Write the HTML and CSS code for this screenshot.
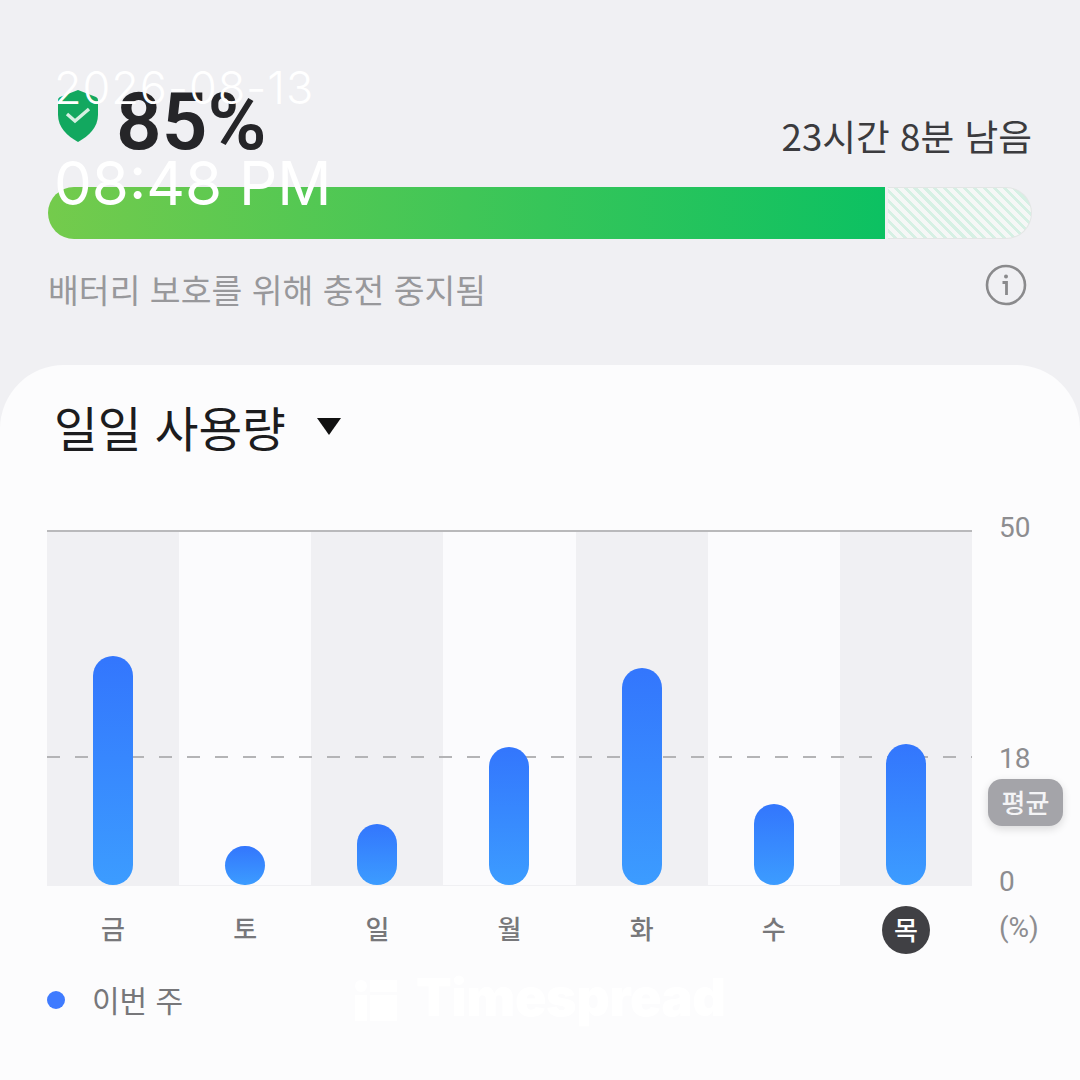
FILE: index.html
```html
<!DOCTYPE html>
<html lang="ko">
<head>
<meta charset="utf-8">
<title>배터리</title>
<link rel="stylesheet" href="styles.css">
</head>
<body>
<div class="stamp">
  <div class="stamp-date">2026-08-13</div>
  <div class="stamp-time">08:48 PM</div>
</div>
<header class="top">
  <div class="status-row">
    <svg class="shield" viewBox="0 0 40 52" aria-hidden="true">
      <path d="M20 0 L38 7 Q40 8 40 10 V25 C40 37 31 46 20 52 C9 46 0 37 0 25 V10 Q0 8 2 7 Z" fill="#12a85f"/>
      <path d="M9 24 L17 31 L31 19" fill="none" stroke="#d5f0e2" stroke-width="3.4"/>
    </svg>
    <div class="percent">85%</div>
    <div class="remaining">23시간 8분 남음</div>
  </div>
  <div class="battery">
    <div class="battery-fill"></div>
    <div class="battery-rest"></div>
  </div>
  <div class="note-row">
    <span class="note">배터리 보호를 위해 충전 중지됨</span>
    <svg class="info" viewBox="0 0 42 42" aria-hidden="true">
      <circle cx="21" cy="21" r="19" fill="none" stroke="#8a8a8c" stroke-width="2.6"/>
      <circle cx="21" cy="12.5" r="2" fill="#8a8a8c"/>
      <path d="M17.5 18.5 H21.5 V31" fill="none" stroke="#8a8a8c" stroke-width="2.8"/>
    </svg>
  </div>
</header>
<main class="card">
  <div class="title-row">
    <h1 class="title">일일 사용량</h1>
    <svg class="caret" viewBox="0 0 24 18" aria-hidden="true"><path d="M0 1 H24 L12 18 Z" fill="#111"/></svg>
  </div>
  <div class="chart-row">
    <div class="chart">
      <div class="col"></div><div class="col alt"></div><div class="col"></div><div class="col alt"></div><div class="col"></div><div class="col alt"></div><div class="col"></div>
      <div class="avg-line"></div>
      <div class="bars">
        <div class="slot"><div class="bar" style="height:229px"></div></div>
        <div class="slot"><div class="bar" style="height:39px"></div></div>
        <div class="slot"><div class="bar" style="height:61px"></div></div>
        <div class="slot"><div class="bar" style="height:138px"></div></div>
        <div class="slot"><div class="bar" style="height:217px"></div></div>
        <div class="slot"><div class="bar" style="height:81px"></div></div>
        <div class="slot"><div class="bar" style="height:141px"></div></div>
      </div>
    </div>
    <div class="axis">
      <span class="tick tick-50">50</span>
      <span class="tick tick-18">18</span>
      <span class="avg-pill">평균</span>
      <span class="tick tick-0">0</span>
    </div>
  </div>
  <div class="days-row">
    <div class="days">
      <span class="day">금</span><span class="day">토</span><span class="day">일</span><span class="day">월</span><span class="day">화</span><span class="day">수</span>
      <span class="day"><span class="today">목</span></span>
    </div>
    <span class="unit">(%)</span>
  </div>
  <div class="legend">
    <span class="legend-dot"></span>
    <span class="legend-text">이번 주</span>
  </div>
  <div class="watermark">
    <svg class="wm-icon" viewBox="0 0 42 41" aria-hidden="true">
      <circle cx="6" cy="6" r="6" fill="#fff"/>
      <rect x="15" y="0" width="27" height="12" fill="#fff"/>
      <rect x="0" y="15" width="12" height="26" fill="#fff"/>
      <rect x="15" y="15" width="27" height="26" fill="#fff"/>
    </svg>
    <span class="wm-text">Timespread</span>
  </div>
</main>
</body>
</html>
```
FILE: styles.css
```css
* { box-sizing: border-box; }
html, body { margin: 0; padding: 0; }
body {
  position: relative;
  width: 1080px;
  height: 1080px;
  overflow: hidden;
  background: #f0f0f3;
  font-family: "Noto Sans CJK KR", "Noto Sans", sans-serif;
  display: flex;
  flex-direction: column;
}
.stamp {
  position: absolute;
  left: 54px;
  top: 58px;
  z-index: 5;
  color: #fff;
  font-family: Inter, sans-serif;
}
.stamp-date { font-size: 45px; line-height: 60px; font-weight: 350; letter-spacing: 0.9px; }
.stamp-time { font-size: 60px; line-height: 72px; margin-top: 29px; font-weight: 400; }

.top { height: 365px; padding: 88px 48px 0; flex: none; }
.status-row { display: flex; align-items: center; height: 76px; }
.shield { width: 40px; height: 52px; margin: -20px 0 0 10px; flex: none; }
.percent {
  font-family: Roboto, sans-serif;
  font-weight: 600;
  font-size: 80px;
  line-height: 76px;
  color: #252528;
  margin-left: 18px;
  margin-top: -8px;
}
.remaining {
  margin-left: auto;
  font-size: 36.7px;
  line-height: 50px;
  color: #3b3b3e;
  margin-top: 17px;
}
.battery { display: flex; gap: 3px; height: 52px; margin-top: 23px; }
.battery-fill {
  width: 837px;
  border-radius: 26px 0 0 26px;
  background: linear-gradient(90deg, #74cb4c 0%, #0cc162 100%);
}
.battery-rest {
  flex: 1;
  border: 1px solid #e3e6e5;
  border-left: 0;
  border-radius: 0 26px 26px 0;
  background: repeating-linear-gradient(45deg, #f5f7f6 0 4px, #d6f0e4 4px 7px);
}
.note-row { display: flex; justify-content: space-between; align-items: center; height: 60px; margin-top: 19px; padding-right: 5px; }
.note { font-size: 33.5px; line-height: 60px; color: #98989b; margin-top: 2px; }
.info { width: 42px; height: 42px; flex: none; margin-top: -6px; }

.card {
  position: relative;
  flex: 1;
  background: #fcfcfd;
  border-radius: 64px 64px 0 0;
  padding: 0 0 0 47px;
}
.title-row { display: flex; align-items: center; height: 165px; padding: 0 0 42px 7px; }
.title { margin: 0; font-size: 47.5px; font-weight: 400; line-height: 60px; color: #1c1c1e; }
.caret { width: 24px; height: 18px; margin: -2px 0 0 31px; }

.chart-row { display: flex; height: 356px; }
.chart {
  position: relative;
  width: 925px;
  display: grid;
  grid-template-columns: repeat(7, 1fr);
  border-top: 2px solid #b9b9bb;
  border-bottom: 1px solid #f0f0f3;
}
.col { background: #f0f0f3; }
.col.alt { background: #fbfbfd; }
.avg-line {
  position: absolute;
  left: 0;
  right: 0;
  top: 224px;
  height: 2px;
  background: repeating-linear-gradient(90deg, #b4b4b6 0 13px, transparent 13px 28px);
}
.bars { position: absolute; inset: 0; display: grid; grid-template-columns: repeat(7, 1fr); align-items: end; }
.slot { display: flex; justify-content: center; align-items: flex-end; }
.bar {
  width: 40px;
  border-radius: 20px;
  background: linear-gradient(180deg, #3376fd 0%, #3c9cff 100%);
}
.axis { position: relative; flex: 1; color: #8d8d90; font-size: 28px; }
.tick { position: absolute; left: 27px; line-height: 34px; font-family: Roboto, sans-serif; }
.tick-50 { top: -19px; }
.tick-18 { top: 212px; }
.tick-0 { top: 335px; }
.avg-pill {
  position: absolute;
  left: 16px;
  top: 249px;
  width: 75px;
  height: 47px;
  border-radius: 14px;
  background: #a4a4a9;
  color: #f4f4f6;
  font-size: 26px;
  line-height: 46px;
  font-weight: 500;
  text-align: center;
  box-shadow: 0 3px 8px rgba(0,0,0,.14);
}
.days-row { display: flex; height: 88px; align-items: center; }
.days { width: 925px; display: grid; grid-template-columns: repeat(7, 1fr); justify-items: center; }
.day { font-size: 26px; line-height: 43px; color: #77777a; display: flex; font-weight: 500; }
.today {
  width: 48px;
  height: 48px;
  border-radius: 50%;
  background: #404044;
  color: #fff;
  text-align: center;
  line-height: 46px;
}
.unit { margin-left: 27px; font-size: 28px; color: #8d8d90; font-family: Roboto, sans-serif; margin-top: -5px; }
.legend { display: flex; align-items: center; height: 50px; margin-top: 1px; }
.legend-dot { width: 18px; height: 18px; border-radius: 50%; background: #3f7bff; }
.legend-text { margin-left: 27px; font-size: 30px; line-height: 50px; color: #77777a; margin-top: -2px; }
.watermark {
  position: absolute;
  left: 355px;
  top: 612px;
  display: flex;
  align-items: center;
  gap: 19px;
}
.wm-icon { width: 42px; height: 41px; }
.wm-text { font-family: Inter, sans-serif; font-weight: 900; font-size: 52px; line-height: 50px; color: #fff; margin-top: -4px; letter-spacing: -0.4px; }
```
